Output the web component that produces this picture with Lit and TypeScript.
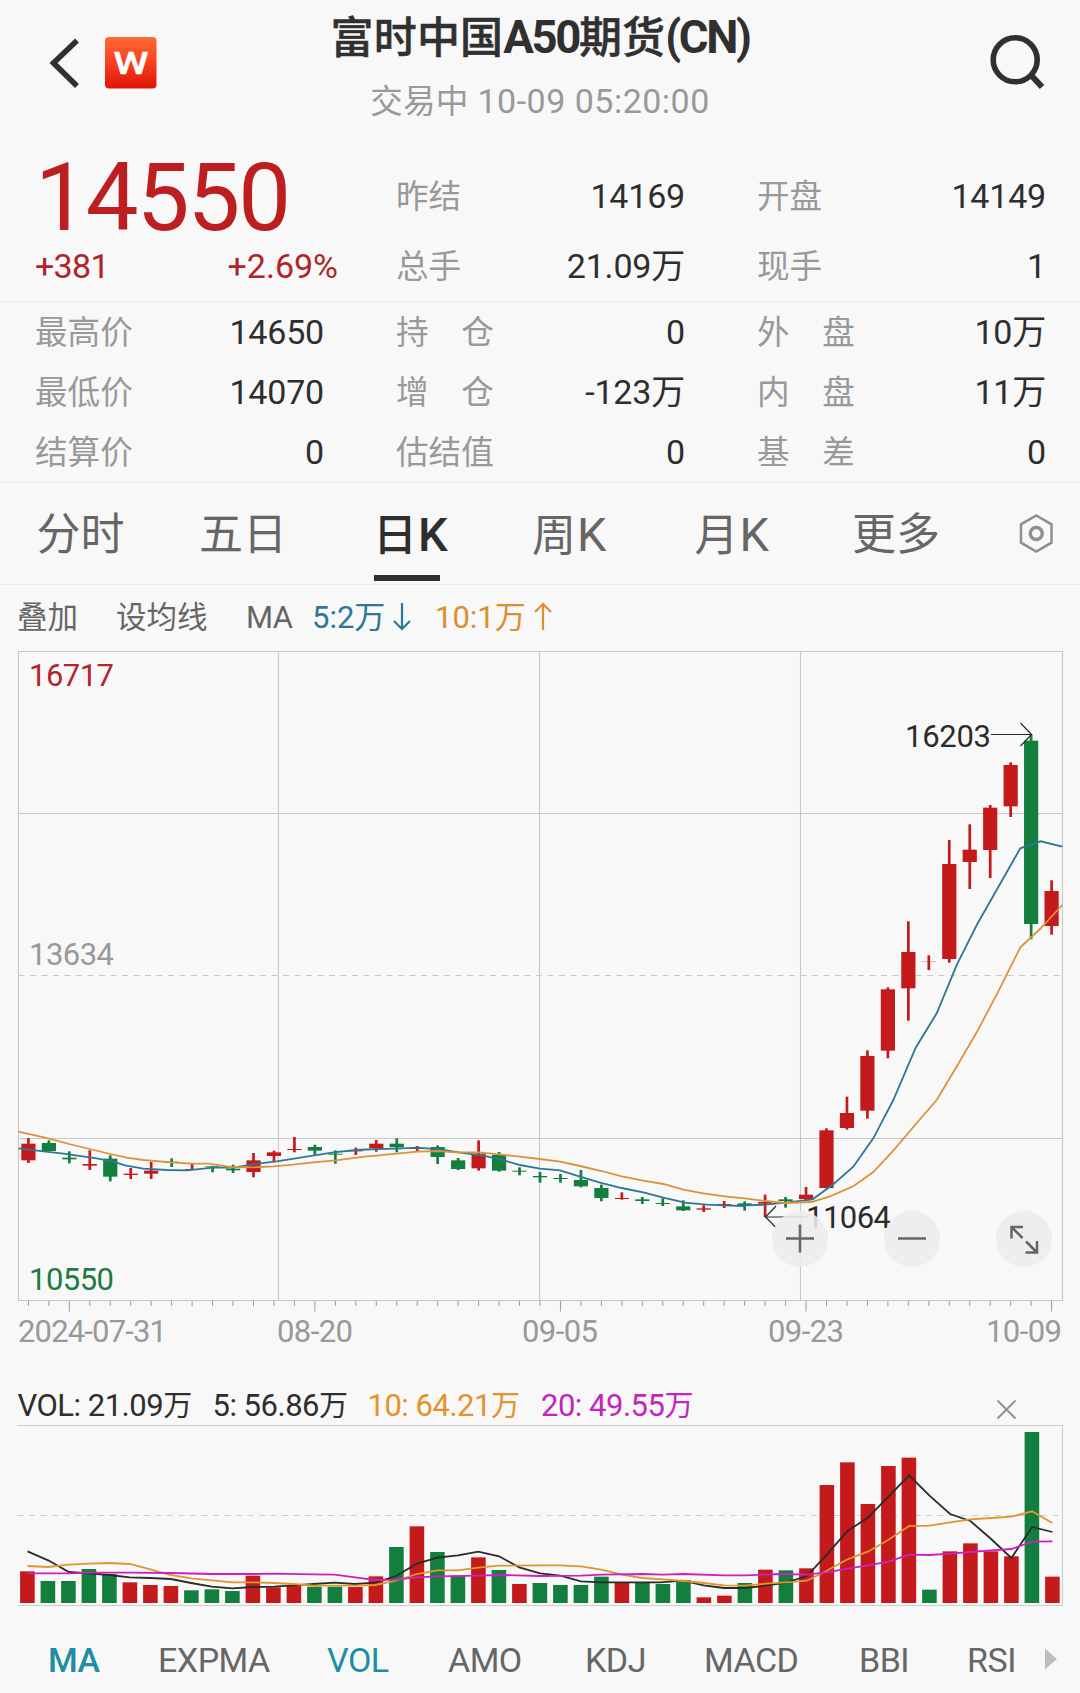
import { LitElement, html, svg, css } from "lit";
import { customElement } from "lit/decorators.js";

type Candle = [up: number, high: number, top: number, bottom: number, low: number];
type Pt = [number, number];

const RED = "#c51a1b";
const GREEN = "#127f3e";

/* Candle extents in thirds of a pixel below y=1100. */
const CANDLES: Candle[] = [
  [1, 114, 131, 181, 189], [0, 121, 129, 153, 153], [0, 154, 173, 178, 190], [1, 151, 192, 197, 210],
  [0, 166, 176, 230, 244], [1, 204, 221, 225, 237], [1, 186, 212, 221, 237], [0, 175, 185, 188, 201],
  [1, 191, 207, 210, 210], [0, 198, 199, 202, 217], [0, 194, 206, 211, 219], [1, 159, 181, 216, 232],
  [1, 152, 157, 168, 184], [1, 111, 147, 150, 157], [0, 134, 141, 152, 165], [0, 151, 161, 164, 191],
  [1, 143, 151, 154, 165], [1, 120, 131, 144, 155], [0, 115, 131, 142, 157], [1, 138, 144, 147, 153],
  [0, 136, 141, 171, 192], [0, 174, 181, 207, 210], [1, 121, 161, 205, 212], [0, 156, 165, 212, 215],
  [0, 202, 212, 215, 226], [0, 216, 228, 232, 248], [0, 222, 234, 237, 248], [0, 210, 240, 259, 262],
  [0, 254, 264, 294, 304], [1, 277, 294, 297, 299], [0, 291, 298, 303, 312], [0, 295, 309, 312, 318],
  [0, 301, 319, 331, 333], [1, 316, 325, 329, 336], [1, 303, 312, 315, 324], [0, 304, 310, 315, 332],
  [1, 284, 306, 311, 351], [0, 291, 298, 303, 323], [1, 261, 284, 297, 303], [1, 85, 91, 264, 265],
  [1, -10, 39, 84, 89], [1, -149, -132, 32, 56], [1, -338, -332, -148, -125], [1, -536, -444, -335, -238],
  [1, -434, -417, -416, -390], [1, -780, -708, -423, -412], [1, -827, -751, -714, -633], [1, -885, -877, -750, -666],
  [1, -1013, -1005, -881, -849], [0, -1097, -1078, -528, -482], [1, -659, -627, -522, -496],
];

const seg = (dx: number, dy: number, sx: number, sy: number, pts: Pt[]): string =>
  pts.map(([x, y]) => `${(dx + x / sx).toFixed(1)},${(dy + y / sy).toFixed(1)}`).join(" ");

const MA5 = [
  seg(0, 1100, 3, 3, [[55, 145], [105, 151], [190, 161], [290, 175], [340, 185], [375, 196], [430, 206], [500, 210], [560, 211], [640, 203], [700, 203], [780, 190], [830, 184], [920, 170], [1000, 157], [1070, 150], [1130, 147]]),
  seg(360, 1100, 3, 3, [[110, 146], [172, 143], [240, 148], [300, 158], [370, 167], [420, 178], [480, 195], [540, 206], [600, 211], [660, 230], [720, 248], [785, 264], [850, 277], [910, 293], [975, 308], [1040, 314], [1093, 316], [1150, 318]]),
  seg(740, 1100, 3, 3, [[14, 316], [76, 314], [137, 308], [218, 298], [280, 253], [340, 200], [400, 115], [460, 0]]),
  seg(740, 700, 3, 3, [[527, 1043], [590, 940], [651, 793], [712, 672], [841, 445], [902, 424], [967, 440]]),
].join(" ");

const MA10 = [
  seg(0, 1100, 3, 3, [[55, 95], [145, 115], [207, 132], [269, 147], [331, 162], [380, 173], [430, 180], [515, 187], [570, 191], [625, 191], [690, 201], [760, 202], [820, 199], [880, 194], [940, 187], [1006, 181], [1100, 169]]),
  seg(360, 1100, 3, 3, [[49, 167], [110, 161], [172, 155], [235, 153], [290, 157], [356, 157], [417, 163], [480, 170], [540, 177], [600, 185], [660, 198], [725, 213], [785, 229], [850, 242], [910, 252], [970, 269], [1030, 280], [1100, 290]]),
  seg(740, 1100, 3, 3, [[14, 295], [76, 303], [137, 309], [215, 306], [270, 289], [340, 259], [400, 216], [460, 152], [525, 75], [590, 0]]),
  seg(740, 700, 3, 3, [[651, 1098], [712, 994], [772, 880], [841, 742], [900, 687], [967, 615]]),
].join(" ");

/* Volume bar tops in thirds of a pixel below y=1380. */
const VOLUMES: Pt[] = [
  [1, 574], [0, 603], [0, 603], [0, 567], [0, 582], [1, 607], [1, 615], [1, 618], [0, 631], [0, 628],
  [0, 633], [1, 587], [1, 622], [1, 615], [0, 620], [0, 620], [1, 621], [1, 589], [0, 501], [1, 439],
  [0, 516], [0, 587], [1, 532], [0, 570], [1, 612], [0, 609], [0, 615], [0, 615], [0, 590], [1, 607],
  [0, 607], [0, 612], [0, 600], [1, 652], [1, 647], [0, 609], [1, 569], [0, 571], [1, 565], [1, 315],
  [1, 247], [1, 372], [1, 258], [1, 233], [0, 629], [1, 514], [1, 490], [1, 514], [1, 529], [0, 156], [1, 590],
];

const K = 2.904;
const vLine = (a: Pt[], b: Pt[]): string => seg(0, 1380, K, 3, a) + " " + seg(540, 1380, K, 3, b);

const VMA5 = vLine(
  [[80, 514], [140, 541], [200, 576], [258, 580], [317, 585], [377, 592], [437, 594], [496, 597], [555, 609], [615, 620], [675, 625], [735, 621], [795, 620], [853, 616], [912, 612], [972, 608], [1031, 612], [1090, 608], [1150, 588], [1211, 551], [1270, 533], [1330, 526], [1389, 515], [1449, 529], [1508, 562]],
  [[0, 580], [59, 587], [119, 604], [178, 607], [350, 607], [415, 602], [475, 616], [535, 624], [596, 624], [655, 617], [715, 608], [775, 588], [833, 524], [893, 453], [952, 413], [1012, 350], [1072, 286], [1131, 347], [1191, 402], [1250, 423], [1310, 477], [1369, 534], [1429, 441], [1488, 456]]);
const VMA10 = vLine(
  [[80, 558], [140, 561], [200, 554], [258, 551], [317, 549], [377, 552], [437, 568], [490, 584], [555, 595], [615, 601], [675, 607], [735, 607], [795, 609], [853, 612], [912, 617], [1031, 617], [1090, 615], [1150, 602], [1211, 582], [1270, 571], [1330, 571], [1389, 563], [1449, 557]],
  [[0, 556], [59, 556], [119, 559], [178, 569], [238, 584], [297, 594], [357, 598], [417, 603], [475, 609], [535, 616], [596, 617], [655, 611], [715, 607], [775, 602], [833, 572], [893, 538], [952, 515], [1012, 479], [1072, 438], [1131, 437], [1191, 427], [1250, 418], [1310, 414], [1369, 410], [1429, 394], [1488, 429]]);
const VMA20 = vLine(
  [[80, 580], [200, 580], [258, 578], [377, 578], [496, 579], [615, 582], [735, 582], [795, 581], [912, 583], [972, 584], [1031, 592], [1090, 600], [1150, 599], [1211, 592], [1270, 589], [1389, 587], [1449, 585]],
  [[0, 588], [119, 587], [178, 584], [297, 582], [357, 584], [417, 582], [535, 586], [596, 586], [700, 582], [775, 584], [833, 577], [893, 566], [952, 556], [1012, 545], [1072, 524], [1131, 525], [1191, 521], [1250, 516], [1310, 511], [1369, 507], [1429, 485], [1488, 484]]);

@customElement("k-chart")
export class KChart extends LitElement {
  static styles = css`
    :host { display: block; position: relative; height: 719px; flex: none; white-space: normal; }
    svg { display: block; }
    text { font-family: Roboto, "Liberation Sans", sans-serif; font-size: 31px; }
    .grid { stroke: #c8c8c8; stroke-width: 1.1; fill: none; }
    .tick { stroke: #9a9a9a; stroke-width: 1; }
    .date { fill: #999; }
    .note { fill: #2b2b2b; }
    .arrow { stroke: #2b2b2b; stroke-width: 1.2; fill: none; }
    .round {
      position: absolute; top: 560px; width: 56px; height: 56px; border-radius: 50%;
      background: rgba(236, 236, 238, 0.88);
    }
    .plus { left: 772px; }
    .minus { left: 884px; }
    .full { left: 996px; }
    .round path { fill: none; stroke: #666; stroke-width: 2.5; }
  `;

  render() {
    const cx = (i: number) => 28.4 + 20.464 * i;
    const y = (v: number) => 1100 + v / 3;
    return html`
      <svg width="1080" height="719" viewBox="0 651 1080 719">
        <path class="grid" d="M18.5 651.5H1062.5V1300.5H18.5ZM278.5 651.5V1300.5M539.5 651.5V1300.5M800.5 651.5V1300.5M18.5 813.5H1062.5M18.5 1138.5H1062.5" />
        <path class="grid" stroke-dasharray="6 5.5" d="M18.5 975.5H1062.5" />
        ${CANDLES.map((_, i) => svg`<line class="tick" x1=${cx(i)} x2=${cx(i)} y1="1301" y2=${i % 12 === 2 ? 1311.5 : 1306} />`)}
        ${CANDLES.map(([up, h, t, b, l], i) => svg`
          <g fill=${up ? RED : GREEN}>
            <rect x=${cx(i) - 1.35} y=${y(h)} width="2.7" height=${(l - h) / 3} />
            <rect x=${cx(i) - 7.1} y=${y(t)} width="14.2" height=${(b - t) / 3} />
          </g>`)}
        <polyline points=${MA5} fill="none" stroke="#2e7796" stroke-width="1.8" />
        <polyline points=${MA10} fill="none" stroke="#dd923a" stroke-width="1.8" />
        <text x="29" y="685.5" fill="#b3242b" textLength="85">16717</text>
        <text x="29" y="965" fill="#999" textLength="85">13634</text>
        <text x="29" y="1290" fill="#1d7a42" textLength="85">10550</text>
        <text class="note" x="905" y="747" textLength="86">16203</text>
        <path class="arrow" d="M991 734.5H1031.5M1020.5 723L1031.5 734.5L1020.5 746" />
        <text class="note" x="806" y="1228" textLength="85">11064</text>
        <path class="arrow" d="M808 1217H765.5M776 1206L765.5 1217L775.5 1227" />
        <text class="date" x="18" y="1342" textLength="149">2024-07-31</text>
        <text class="date" x="277" y="1342" textLength="76">08-20</text>
        <text class="date" x="522" y="1342" textLength="76">09-05</text>
        <text class="date" x="768" y="1342" textLength="76">09-23</text>
        <text class="date" x="986" y="1342" textLength="76">10-09</text>
      </svg>
      <div class="round plus"><svg width="56" height="56"><path d="M14 27.5H42M28 13.5V41.5" /></svg></div>
      <div class="round minus"><svg width="56" height="56"><path d="M14 27.5H42" /></svg></div>
      <div class="round full"><svg width="56" height="56"><path d="M27 16H15.5V27.5M15.5 16L26.5 27M29.5 41.5H41V30M41 41.5L30 30.5" /></svg></div>
    `;
  }
}

@customElement("volume-chart")
export class VolumeChart extends LitElement {
  static styles = css`
    :host { display: block; height: 195px; flex: none; white-space: normal; }
    svg { display: block; }
    .grid { stroke: #c9d0d0; stroke-width: 1.1; fill: none; }
    polyline { fill: none; stroke-width: 1.8; }
  `;

  render() {
    return html`
      <svg width="1080" height="195" viewBox="0 1425 1080 195">
        <path class="grid" d="M17.5 1425.5H1062.5V1605.5H17.5" />
        <path class="grid" stroke-dasharray="6 5.5" d="M17.5 1515.5H1062.5" />
        ${VOLUMES.map(([up, t], i) => svg`
          <rect x=${20.1 + 20.5 * i} y=${1380 + t / 3} width="14.6" height=${(669 - t) / 3} fill=${up ? RED : GREEN} />`)}
        <polyline points=${VMA5} stroke="#2b2b2b" />
        <polyline points=${VMA10} stroke="#e0962f" />
        <polyline points=${VMA20} stroke="#cf1fc4" />
      </svg>
    `;
  }
}

@customElement("app-root")
export class AppRoot extends LitElement {
  static styles = css`
    :host {
      display: flex; flex-direction: column; width: 1080px; height: 1693px; overflow: hidden;
      background: #f8f8f8; color: #2e2e2e;
      font-family: Roboto, "Noto Sans CJK SC", sans-serif; font-size: 34px; white-space: pre;
    }
    * { box-sizing: border-box; }
    svg { display: block; flex: none; }

    header { display: grid; grid-template-columns: 270px 540px 270px; height: 161px; }
    .left { display: flex; align-items: flex-start; padding: 37px 0 0 47px; gap: 22px; }
    .logo-text { font: 500 32px Roboto, sans-serif; fill: #fff; stroke: #fff; stroke-width: 0.5px; }
    .back { margin-top: -2px; }
    .heading { display: flex; flex-direction: column; align-items: center; }
    .title { font-size: 43px; line-height: 76px; font-weight: 700; color: #303030; }
    .title .cjk { font-weight: 500; -webkit-text-stroke: 0.5px #303030; letter-spacing: 0.2px; }
    .title .latin { font-size: 45.5px; letter-spacing: -2.4px; }
    .time { line-height: 50px; color: #999; letter-spacing: 0.5px; }
    .cjk-s { font-size: 32.6px; letter-spacing: 0.2px; }
    .right { display: flex; justify-content: flex-end; padding: 34px 34px 0 0; }

    .quote, .stats { display: grid; grid-template-columns: repeat(3, 289px); column-gap: 72px; padding: 0 34px 0 35px; }
    .quote { grid-template-rows: 70px 70px; height: 141px; border-bottom: 1px solid #ececec; }
    .stats { grid-auto-rows: 60px; height: 181px; border-bottom: 1px solid #ececec; }
    .cell { display: flex; justify-content: space-between; }
    .quote .cell { line-height: 70px; }
    .stats .cell { line-height: 60px; }
    .label { font-size: 32.6px; color: #999; padding-top: 1px; }
    .value { letter-spacing: -0.2px; }
    .price { font-size: 94px; line-height: 75px; color: #bd1f21; letter-spacing: -2px; }
    .change { color: #b02329; letter-spacing: -0.7px; margin-right: -14px; }
    .pct { letter-spacing: 0; }

    .tabs { display: grid; grid-template-columns: 162.5px 174px 159px 162.5px 157.5px 166.5px 40px; height: 102px; padding: 3px 0 0 36.5px; border-bottom: 1px solid #e9e9e9; font-size: 44px; line-height: 98px; color: #666; }
    .tab .k { font-size: 47px; margin-left: 1px; }
    .on { color: #2e2e2e; font-weight: 500; }
    .on::after { content: ""; display: block; width: 66px; height: 6px; margin: -10px 0 0 1px; background: #303030; }
    .tabs svg { margin: 28px 0 0 -1px; }

    .legend { display: flex; height: 66px; padding-left: 17px; font-size: 31px; line-height: 65px; color: #666; }
    .legend .cn { font-size: 30.5px; }
    .overlay { width: 99px; }
    .setma { width: 130px; }
    .ma { width: 66px; letter-spacing: -0.5px; }
    .blue { color: #2e7796; }
    .orange { color: #dd8f2f; }
    .ma5, .ma10 { display: flex; }
    .ma5 { width: 123px; }
    .legend svg { margin: 17px 0 0 7px; }

    .vol-head { display: flex; height: 55px; padding: 16px 0 0 17.5px; font-size: 31px; line-height: 39px; letter-spacing: -0.5px; }
    .vol-head .w { font-size: 29px; }
    .v0 { width: 195px; }
    .v1 { width: 155px; }
    .v2 { width: 173.5px; color: #e3932a; }
    .v3 { width: 455px; color: #c425bd; }
    .vol-head svg { margin-top: 13px; }

    .indicators { display: grid; grid-template-columns: 110px 169px 121px 137px 119px 155px 108px 76px 20px; height: 73px; padding: 7px 0 0 48px; line-height: 66px; color: #666; letter-spacing: -0.5px; }
    .teal { color: #1d8ea3; }
    .strong { font-weight: 500; }
    .indicators svg { margin-top: 21px; }
  `;

  private cell(label: string, value: string) {
    return html`<div class="cell"><span class="label">${label}</span><span class="value">${value}</span></div>`;
  }

  render() {
    return html`
      <header>
        <div class="left">
          <svg class="back" width="36" height="54"><path d="M30 5.5L6.5 28L30 51" fill="none" stroke="#303030" stroke-width="5.6" /></svg>
          <svg width="52" height="52">
            <defs><linearGradient id="g" x1="0" y1="0" x2="0" y2="1">
              <stop offset="0" stop-color="#ff6a36" /><stop offset="0.5" stop-color="#f7401f" /><stop offset="1" stop-color="#e01408" />
            </linearGradient></defs>
            <rect width="51.5" height="51.5" rx="4" fill="url(#g)" />
            <text class="logo-text" x="8.5" y="36.5" textLength="35" lengthAdjust="spacingAndGlyphs">W</text>
          </svg>
        </div>
        <div class="heading">
          <div class="title"><span class="cjk">富时中国</span><span class="latin">A50</span><span class="cjk">期货</span><span class="latin">(CN)</span></div>
          <div class="time"><span class="cjk-s">交易中</span> 10-09 05:20:00</div>
        </div>
        <div class="right">
          <svg width="58" height="58"><circle cx="27.2" cy="25.8" r="22" fill="none" stroke="#303030" stroke-width="5.6" /><path d="M43 41L54 53" stroke="#303030" stroke-width="6" /></svg>
        </div>
      </header>

      <section class="quote">
        <div class="price">14550</div>
        ${this.cell("昨结", "14169")}
        ${this.cell("开盘", "14149")}
        <div class="cell change"><span>+381</span><span class="pct">+2.69%</span></div>
        ${this.cell("总手", "21.09万")}
        ${this.cell("现手", "1")}
      </section>

      <section class="stats">
        ${this.cell("最高价", "14650")}${this.cell("持　仓", "0")}${this.cell("外　盘", "10万")}
        ${this.cell("最低价", "14070")}${this.cell("增　仓", "-123万")}${this.cell("内　盘", "11万")}
        ${this.cell("结算价", "0")}${this.cell("估结值", "0")}${this.cell("基　差", "0")}
      </section>

      <nav class="tabs">
        <div class="tab">分时</div>
        <div class="tab">五日</div>
        <div class="tab on">日<span class="k">K</span></div>
        <div class="tab">周<span class="k">K</span></div>
        <div class="tab">月<span class="k">K</span></div>
        <div class="tab">更多</div>
        <svg width="38" height="40" fill="none" stroke="#8f8f8f"><path stroke-width="2.5" d="M18.3 1.5L33.5 10.3V28.7L18.3 37.5L3 28.7V10.3Z" /><circle cx="18.3" cy="19.5" r="6" stroke-width="3.4" /></svg>
      </nav>

      <div class="legend">
        <span class="cn overlay">叠加</span>
        <span class="cn setma">设均线</span>
        <span class="ma">MA</span>
        <span class="blue ma5">5:2万<svg width="20" height="30" fill="none" stroke="#2e7796" stroke-width="2.2"><path d="M10 1V27M2 19L10 27L18 19" /></svg></span>
        <span class="orange ma10">10:1万<svg width="20" height="30" fill="none" stroke="#dd8f2f" stroke-width="2.2"><path d="M10 28V2M2 10L10 2L18 10" /></svg></span>
      </div>

      <k-chart></k-chart>

      <div class="vol-head">
        <span class="v0">VOL: 21.09<span class="w">万</span></span>
        <span class="v1">5: 56.86<span class="w">万</span></span>
        <span class="v2">10: 64.21<span class="w">万</span></span>
        <span class="v3">20: 49.55<span class="w">万</span></span>
        <svg width="21" height="21"><path d="M1.5 1.5L19.5 19.5M19.5 1.5L1.5 19.5" stroke="#8f8f8f" stroke-width="1.8" /></svg>
      </div>

      <volume-chart></volume-chart>

      <nav class="indicators">
        <span class="teal strong">MA</span><span>EXPMA</span><span class="teal">VOL</span><span>AMO</span>
        <span>KDJ</span><span>MACD</span><span>BBI</span><span>RSI</span>
        <svg width="14" height="22"><path d="M2 0.5L14 11L2 21.5Z" fill="#bdbdbd" /></svg>
      </nav>
    `;
  }
}
